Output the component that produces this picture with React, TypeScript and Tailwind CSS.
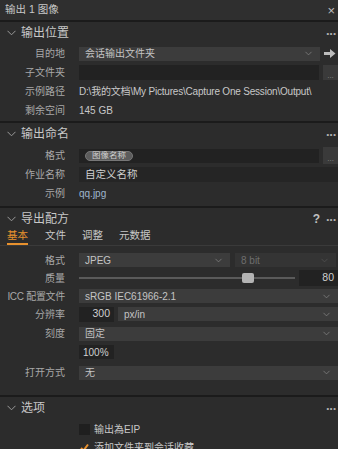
import { ChevronDown } from 'lucide-react'

const font = { fontFamily: '"Liberation Sans", "Noto Sans CJK SC", sans-serif' }

function Chevron({ dim }: { dim?: boolean }) {
  return <ChevronDown size={11} strokeWidth={1.5} className={dim ? 'text-[#555]' : 'text-[#8a8a8a]'} />
}

function Dots() {
  return <span className="text-[#b0b0b0] text-[13px] leading-none tracking-[-1px] font-bold">···</span>
}

function SectionHeader({ title, extra }: { title: string; extra?: React.ReactNode }) {
  return (
    <div className="flex items-center h-[22px] pl-[7px] pr-[2px]">
      <svg width="9" height="6" viewBox="0 0 9 6" className="mr-[5px]">
        <path d="M0.5 0.8 L4.5 4.8 L8.5 0.8" stroke="#9a9a9a" strokeWidth="1" fill="none" />
      </svg>
      <span className="text-[12px] text-[#c8c8c8] flex-1">{title}</span>
      {extra}
      <Dots />
    </div>
  )
}

function Row({ label, children, h = 'h-[19px]', labelClass = '' }: { label: string; children?: React.ReactNode; h?: string; labelClass?: string }) {
  return (
    <div className={`flex items-center ${h}`}>
      <div className={`w-[65px] shrink-0 text-right text-[10px] text-[#a8a8a8] whitespace-nowrap ${labelClass}`}>{label}</div>
      <div className="flex-1 flex items-center ml-[14px] min-w-0">{children}</div>
    </div>
  )
}

function Select({ value, className = '', dim }: { value: string; className?: string; dim?: boolean }) {
  return (
    <div className={`h-[14px] flex items-center justify-between pl-[6px] pr-[6px] ${dim ? 'bg-[#343434]' : 'bg-[#3c3c3c]'} ${className}`}>
      <span className={`text-[10px] ${dim ? 'text-[#6e6e6e]' : 'text-[#c4c4c4]'}`}>{value}</span>
      <Chevron dim={dim} />
    </div>
  )
}

function Divider() {
  return <div className="h-[2px] bg-[#1b1b1b]" />
}

export default function App() {
  return (
    <div className="w-[338px] h-[449px] overflow-hidden bg-[#2c2c2c] select-none" style={font}>
      {/* title */}
      <div className="h-[20px] flex items-center justify-between pl-[5px] pr-[3px] bg-[#2f2f2f]">
        <span className="text-[10.5px] text-[#c8c8c8]">输出 1 图像</span>
        <span className="text-[#bdbdbd] text-[13px] leading-none">×</span>
      </div>
      <Divider />

      {/* 输出位置 */}
      <SectionHeader title="输出位置" />
      <Row label="目的地">
        <Select value="会话输出文件夹" className="w-[241px]" />
        <svg width="12" height="9" viewBox="0 0 12 9" className="ml-[4px]">
          <path d="M0 3 H6 V0 L11.5 4.5 L6 9 V6 H0 Z" fill="#bcbcbc" />
        </svg>
      </Row>
      <Row label="子文件夹">
        <div className="h-[15px] w-[240px] bg-[#222222]" />
        <div className="h-[15px] w-[15px] ml-[4px] bg-[#3a3a3a] flex items-end justify-center text-[8px] text-[#888] leading-[8px]">...</div>
      </Row>
      <Row label="示例路径">
        <span className="text-[10px] text-[#c8c8c8] whitespace-nowrap tracking-[-0.2px]">D:\我的文档\My Pictures\Capture One Session\Output\</span>
      </Row>
      <Row label="剩余空间">
        <span className="text-[10px] text-[#c8c8c8]">145 GB</span>
      </Row>
      <div className="h-[1px]" />
      <Divider />

      {/* 输出命名 */}
      <SectionHeader title="输出命名" />
      <div className="h-[1px]" />
      <Row label="格式">
        <div className="h-[14px] w-[241px] bg-[#222222] flex items-center pl-[6px]">
          <span className="h-[10px] px-[6px] rounded-full bg-[#5c5c5c] border border-[#777] text-[8.5px] text-[#d0d0d0] flex items-center leading-none">图像名称</span>
        </div>
        <div className="h-[17px] w-[15px] ml-[4px] bg-[#3a3a3a] flex items-end justify-center text-[8px] text-[#888] leading-[8px] pb-[1px]">...</div>
      </Row>
      <Row label="作业名称">
        <div className="h-[15px] flex-1 bg-[#252525] flex items-center pl-[6px]">
          <span className="text-[10.5px] text-[#d0d0d0]">自定义名称</span>
        </div>
      </Row>
      <Row label="示例">
        <span className="text-[10px] text-[#9fb6cc]">qq.jpg</span>
      </Row>
      <div className="h-[3px]" />
      <Divider />

      {/* 导出配方 */}
      <SectionHeader
        title="导出配方"
        extra={<span className="text-[12px] text-[#c0c0c0] font-bold mr-[6px] leading-none">?</span>}
      />
      <div className="flex items-end h-[16px] pl-[7px] text-[10.5px] text-[#c8c8c8] border-b border-[#3a3a3a]">
        <div className="w-[38px]">
          <span className="inline-block text-[#e8912e] border-b-2 border-[#e8912e] pb-[1px] leading-[13px]">基本</span>
        </div>
        <span className="w-[37px] pb-[3px] leading-[13px]">文件</span>
        <span className="w-[37px] pb-[3px] leading-[13px]">调整</span>
        <span className="pb-[3px] leading-[13px]">元数据</span>
      </div>
      <div className="h-[5px]" />
      <Row label="格式" h="h-[18px]">
        <Select value="JPEG" className="w-[151px]" />
        <Select value="8 bit" className="w-[101px] ml-[5px]" dim />
      </Row>
      <Row label="质量" h="h-[18px]">
        <div className="relative w-[216px] h-[10px] flex items-center">
          <div className="w-full h-[2px] bg-[#5a5a5a]" />
          <div className="absolute left-[163px] top-[0px] w-[12px] h-[10px] rounded-[2px] bg-[#b4b4b4]" />
        </div>
        <div className="h-[16px] w-[39px] ml-[4px] bg-[#222222] flex items-center justify-end pr-[4px] text-[10.5px] text-[#d0d0d0]">80</div>
      </Row>
      <Row label="ICC 配置文件" h="h-[18px]" labelClass="tracking-[-0.3px]">
        <Select value="sRGB IEC61966-2.1" className="flex-1" />
      </Row>
      <Row label="分辨率" h="h-[18px]">
        <div className="h-[15px] w-[35px] bg-[#222222] flex items-center justify-end pr-[4px] text-[10.5px] text-[#d0d0d0]">300</div>
        <Select value="px/in" className="flex-1 ml-[4px]" />
      </Row>
      <div className="h-[1px]" />
      <Row label="刻度" h="h-[19px]">
        <Select value="固定" className="flex-1" />
      </Row>
      <Row label="" h="h-[18px]">
        <div className="h-[14px] w-[35px] bg-[#222222] flex items-center pl-[4px] text-[10px] text-[#d0d0d0]">100%</div>
      </Row>
      <div className="h-[2px]" />
      <Row label="打开方式" h="h-[19px]">
        <Select value="无" className="flex-1" />
      </Row>
      <div className="h-[13px]" />
      <Divider />

      {/* 选项 */}
      <SectionHeader title="选项" />
      <div className="flex items-center h-[18px] pl-[79px] mt-[1px]">
        <div className="w-[11px] h-[11px] bg-[#1f1f1f]" />
        <span className="ml-[4px] text-[10px] text-[#c8c8c8]">输出為EIP</span>
      </div>
      <div className="flex items-center h-[18px] pl-[79px]">
        <svg width="11" height="11" viewBox="0 0 11 11">
          <path d="M2 6 L4.5 8.5 L9 2.5" stroke="#e8912e" strokeWidth="2" fill="none" />
        </svg>
        <span className="ml-[4px] text-[10px] text-[#c8c8c8]">添加文件夹到会话收藏</span>
      </div>
    </div>
  )
}
